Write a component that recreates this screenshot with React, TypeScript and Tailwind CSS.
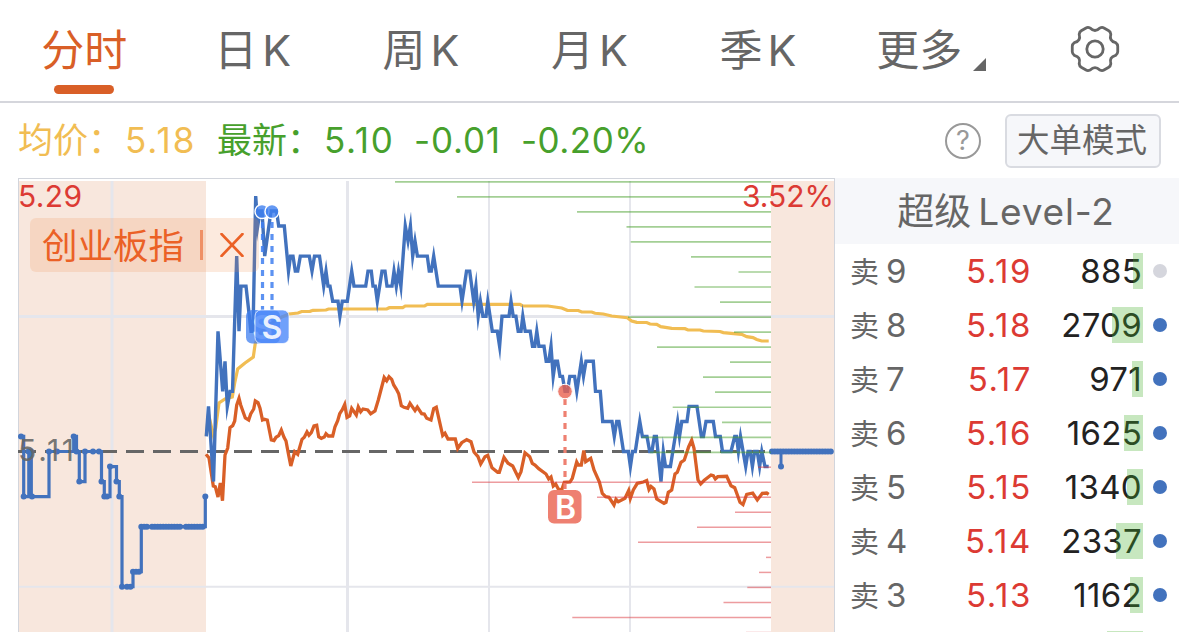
import type { ReactNode } from "react";
import clsx from "clsx";

type Point = [number, number];

type Order = {
  level: number;
  price: string;
  volume: string;
  bar: number;
  muted?: boolean;
};

const TABS = ["日", "周", "月", "季"];

const ORDERS: Order[] = [
  { level: 9, price: "5.19", volume: "885", bar: 10, muted: true },
  { level: 8, price: "5.18", volume: "2709", bar: 31 },
  { level: 7, price: "5.17", volume: "971", bar: 11 },
  { level: 6, price: "5.16", volume: "1625", bar: 19 },
  { level: 5, price: "5.15", volume: "1340", bar: 16 },
  { level: 4, price: "5.14", volume: "2337", bar: 27 },
  { level: 3, price: "5.13", volume: "1162", bar: 13 },
];

// Chart geometry: one price tick is 15.03px, previous close sits on BASE_Y
const BASE_Y = 451.5;
const TICK = 15.03;

// [x, ticks above previous close]
const PRICE: Point[] = [
  [206.3, 1], [208.5, 3], [213.5, -2], [218, 8], [222.7, 4], [225, 6], [227.3, 3], [230, 4], [232.5, 4],
  [236.7, 13], [239, 8], [241, 11], [246, 11], [251, 8], [253, 8], [255.7, 17], [257.7, 15], [260, 16], [262, 16],
  [264.7, 13], [271, 16], [276.5, 16], [278.7, 15], [284.3, 15], [288.5, 12], [290.5, 13], [293, 13], [295.3, 12],
  [297.7, 12], [300.3, 13], [309.3, 13], [312, 12], [314.5, 13], [319.5, 13], [323.7, 11], [326, 12], [328, 11],
  [330, 11], [332.7, 10], [338, 10], [339.9, 9], [342.3, 10], [347.3, 10], [351.7, 12], [354, 11], [365.7, 11],
  [368, 12], [371.3, 12], [373, 11], [375.3, 11], [377.3, 10], [382, 12], [385, 12], [387, 11], [392, 11],
  [394, 12], [396.3, 11], [398.5, 12], [400.9, 11], [405.3, 15], [408, 14], [410.4, 15], [412.7, 13], [415, 14],
  [417.4, 13], [427.3, 13], [429.3, 12], [431.3, 12], [433.7, 13], [438.3, 11], [460, 11], [462, 10], [466.5, 12],
  [469.7, 12], [473.7, 10], [475.9, 11], [478.2, 9], [480.4, 10], [482.9, 9], [486, 9], [487.8, 10], [492.3, 8],
  [497.3, 8], [499.6, 7], [502, 9], [509, 9], [511, 10], [513.2, 9], [515.9, 9], [518.2, 8], [521, 8], [522.8, 9],
  [525.2, 8], [530.2, 8], [532.5, 7], [534.8, 7], [536.8, 8], [538.9, 7], [544, 7], [546.2, 6], [548.8, 6],
  [551, 7], [553.2, 5], [555.4, 6], [557.5, 6], [560, 5], [562.5, 5], [565, 4], [567.5, 4], [569.8, 5], [574.6, 5],
  [576.8, 4], [581.3, 6], [583.5, 5], [586, 6], [593.3, 6], [595.5, 4], [600.3, 4], [602.7, 2], [612, 2], [614.3, 1],
  [616.7, 2], [618.9, 2], [623.5, 0], [628.3, 0], [630.4, -1], [632.6, 0], [635.3, 0], [639.8, 2], [642.4, 1],
  [647, 1], [649.7, 0], [651.9, 0], [654.3, 1], [656.4, 1], [661, -2], [663.3, 0], [665.5, -1], [670.4, -1],
  [677.6, 2], [679.5, 1], [681.8, 2], [687, 2], [689, 3], [697, 3], [701.4, 1], [703.4, 1], [706, 2], [713.3, 2],
  [715.5, 1], [720.3, 1], [722.5, 0], [731, 0], [734.7, 1], [736.5, 1], [738.4, 0], [740.5, 1], [745.7, -1],
  [748, 0], [750.2, 0], [752.4, -1], [754.6, 0], [757.2, 0], [759.6, -1], [761.8, 0], [765, -1], [768.7, -1],
];

const AVERAGE: Point[] = [
  [206.3, 436], [208.5, 414], [213.3, 435], [215.7, 428], [219, 403], [225, 399], [232.3, 397], [234.7, 383],
  [237.7, 369], [245, 363], [253.3, 357], [255.3, 343], [262, 331], [272, 323], [282, 317], [289, 314], [298, 313],
  [301.7, 311.5], [310, 311.3], [313, 310.3], [326, 310], [328.5, 309], [386.7, 309], [389.3, 307.7], [402.7, 307.6],
  [405.3, 306], [424.7, 305.8], [427.3, 304.3], [520, 304.3], [522.7, 305.8], [548, 306], [561.7, 308], [567.3, 310.3],
  [578.3, 310.5], [581.7, 312], [591.7, 312], [595, 313.3], [603.3, 314], [611.7, 316], [627.3, 317.7], [631.7, 321],
  [636.7, 322.4], [646.7, 322.5], [650, 324], [656.7, 324.3], [660.7, 326.6], [671.7, 328.3], [685, 328.7], [688, 330],
  [700, 330], [703.3, 331], [720, 331.5], [723.3, 332.6], [741.7, 334.3], [746.7, 336.6], [753, 337.6], [756.7, 339.4],
  [761.7, 341], [768.7, 341],
];

const INDEX: Point[] = [
  [206, 454.3], [209, 458], [213.3, 486], [215.3, 486.7], [218, 497], [220.3, 483], [222.5, 500.7], [225, 455],
  [227.7, 448], [230, 427.7], [232.7, 425.7], [234.7, 421], [236.7, 405], [239, 398.3], [240.7, 405], [245.3, 418],
  [248.7, 420], [250.7, 414], [253.7, 409], [255.3, 401], [258, 402.7], [260, 408.3], [262.5, 420], [264.3, 419.3],
  [267.3, 420], [271.3, 440], [274, 440.7], [276, 437.3], [278.7, 435.7], [281.3, 430], [284, 437.3], [286, 441],
  [288, 451.7], [290.8, 466], [294.7, 451.7], [297.7, 454.3], [302, 439.3], [304.3, 437.3], [307, 432], [309, 435.3],
  [311.3, 432.7], [314, 426], [316.7, 425.3], [318.7, 436.7], [321.3, 438.3], [324.3, 437], [326, 433.7], [328.3, 436],
  [332.7, 436], [335, 426.7], [337.7, 420.7], [339.7, 413.7], [342.3, 409.7], [344.7, 404.5], [347, 417.5],
  [349.7, 416], [351.7, 408.3], [356.3, 415], [358.3, 407], [360.7, 411.7], [363, 409], [367.7, 410], [370.7, 413.8],
  [375, 411], [378.3, 400], [384.2, 377.5], [386.7, 380.7], [389, 376.7], [391.7, 379.3], [393.7, 385], [396.3, 389],
  [398.7, 393.7], [401.3, 405.7], [404, 407.3], [407.7, 408.3], [410, 403.3], [415, 410.6], [417.3, 407],
  [421.7, 413.7], [424.3, 414], [426.7, 418.3], [431, 420], [433.7, 408.7], [436.3, 407.3], [442.7, 435.5], [445, 433.2],
  [448, 439], [455.3, 439], [457.7, 448.5], [461.7, 442.7], [466.7, 439.7], [471, 441.7], [474, 452], [478, 456.7],
  [480.7, 464], [485, 456.7], [487.7, 455.3], [492, 467.7], [497.7, 472.3], [499.3, 472.3], [504, 457.5], [508, 463.3],
  [512.7, 466], [518.3, 477.5], [521, 471.7], [525, 452.7], [529.7, 456.7], [532.3, 463.3], [535, 465], [538.7, 468.7],
  [546, 474], [548.7, 479], [551, 477], [553.3, 486], [555.7, 484], [558.3, 489], [561.7, 490], [564.3, 482.3],
  [570, 482], [572.3, 478.3], [576.7, 462], [578.3, 465], [581.3, 465], [583.8, 450.5], [585.7, 461.7], [590.7, 458.3],
  [594, 470], [599.3, 481.7], [602.3, 493.3], [605.7, 496.7], [609, 497.3], [614, 505], [616, 499.3], [618.3, 501.7],
  [625, 498.3], [628.7, 490.5], [630.3, 498.5], [633.3, 490], [637.3, 483.3], [643.3, 482], [646.7, 480.5], [649, 489.5],
  [651, 486.5], [654, 489], [656.7, 499], [664, 503.3], [666, 502.3], [668.3, 492.3], [671.7, 490], [675, 474],
  [677.3, 472.3], [681, 462.3], [684.3, 460], [688.7, 446.7], [691.7, 440.3], [694, 448.3], [698, 480], [700.7, 484],
  [704.3, 480.3], [711, 475], [713.3, 475.7], [715.3, 479], [717.7, 476.7], [726.7, 476.3], [731, 485.7],
  [734.7, 487.7], [740, 502.2], [743, 504.5], [746.7, 494.3], [752.7, 493], [757.3, 500], [762.3, 493.3], [766.7, 493],
  [768.7, 494.3],
];

const AUCTION: Point[] = [
  [21, 1], [23.7, 1], [23.7, -3], [28.8, -3], [28.8, 0], [31.3, 0], [31.3, -3], [49, -3], [49, 0], [73.7, 0],
  [73.7, 1], [76.5, 1], [76.5, 0], [79.3, 0], [79.3, -2], [85, -2], [85, 0], [101.5, 0], [101.5, -2], [104.3, -2],
  [104.3, -3], [110, -3], [110, -1], [116.5, -1], [116.5, -2], [119.3, -2], [119.3, -3], [122, -3], [122, -9],
  [133, -9], [133, -8], [141.3, -8], [141.3, -5], [205.3, -5], [205.3, -3],
];

const AUCTION_DOTS: Point[] = [
  [21, 1], [23.7, -3], [28.5, 0], [31, 0], [32, -3], [49, 0], [57, 0], [73.7, 1], [76.5, 0], [79.3, -2], [85, 0],
  [93, 0], [99, 0], [101.5, -2], [104.3, -3], [107, -3], [110, -1], [116.5, -2], [119.3, -3], [122, -9], [127, -9],
  [130.5, -9], [133, -8], [136, -8], [139, -8], [205.3, -3], [781, -1],
];

// Left edge of each volume-by-price line, top to bottom
const SELL_LINES = [395, 457, 577, 626.5, 630.7, 691, 738.5, 694.5, 720, 628, 734, 657, 730, 703, 715, 672.7, 722, 641.7, 650];
const BUY_LINES = [758, 472, 597, 735, 697, 638, 766, 759, 747.3, 723.5, 572.3, 746];

const tickY = (ticks: number) => BASE_Y - ticks * TICK;
const toPoints = (points: Point[]) => points.map((p) => p.join(",")).join(" ");
const fromTicks = (points: Point[]): Point[] => points.map(([x, t]) => [x, tickY(t)]);
const range = (from: number, to: number, step: number) =>
  Array.from({ length: Math.floor((to - from) / step) + 1 }, (_, i) => from + i * step);

const gearPath = () => {
  const at = (deg: number, r: number) => {
    const a = (deg * Math.PI) / 180;
    return `${(25 + r * Math.cos(a)).toFixed(2)} ${(25 + r * Math.sin(a)).toFixed(2)}`;
  };
  const lobes = [0, 60, 120, 180, 240, 300].map(
    (d) =>
      `${d === 0 ? "M" : "L"}${at(d - 17, 21.6)} Q${at(d - 12, 23.2)} ${at(d - 7, 22.9)} L${at(d + 7, 22.9)} Q${at(d + 12, 23.2)} ${at(d + 17, 21.6)} Q${at(d + 30, 16)} ${at(d + 43, 21.6)}`
  );
  return `${lobes.join(" ")} Z`;
};

const Tab = ({ children }: { children: ReactNode }) => (
  <div className="flex items-center justify-center text-[43px] leading-none text-[#666]">{children}</div>
);

const TabBar = () => (
  <div className="grid h-[103px] grid-cols-7 border-b-2 border-[#d5d6dc]">
    <div className="flex flex-col items-center pt-[29px] text-[#d95f27]">
      <span className="text-[43px] leading-[43px]">分时</span>
      <span className="mt-[13px] h-[9px] w-[60px] rounded-full bg-[#d95f27]" />
    </div>
    {TABS.map((tab) => (
      <Tab key={tab}>
        <span className="mr-[5px]">{tab}</span>K
      </Tab>
    ))}
    <Tab>
      <span className="ml-2.5">更多</span>
      <svg width="13" height="13" className="mt-7 ml-[11px]">
        <path d="M13 0V13H0Z" fill="#666" />
      </svg>
    </Tab>
    <div className="flex items-center justify-center pb-1">
      <svg width="50" height="50" fill="none" stroke="#666" strokeWidth="2.8" strokeLinejoin="round">
        <path d={gearPath()} />
        <circle cx="25" cy="25" r="8.2" />
      </svg>
    </div>
  </div>
);

const QuoteBar = () => (
  <div className="flex h-[75px] items-center pr-[18px] pl-[18px] text-[35px] leading-none whitespace-nowrap">
    <span className="w-[107px] text-[#f1bd53]">均价：</span>
    <span className="w-[92px] tracking-[2px] text-[#f1bd53]">5.18</span>
    <div className="flex grow text-[#47a02c]">
      <span className="w-[107px]">最新：</span>
      <span className="w-[90px] tracking-[1.7px]">5.10</span>
      <span className="w-[107px] tracking-[0.8px]">-0.01</span>
      <span className="tracking-[0.5px]">-0.20%</span>
    </div>
    <span className="mr-6 flex size-9 items-center justify-center rounded-full border-2 border-[#999] text-[27px] text-[#999]">?</span>
    <span className="flex h-[54px] w-[156px] items-center justify-center rounded-md border-2 border-[#d9dbe1] bg-[#f6f7fa] pt-0.5 pr-0.5 text-[32.5px] text-[#666]">
      大单模式
    </span>
  </div>
);

const Chart = () => (
  <svg width="817" height="454" viewBox="18 178 817 454" className="block" fill="none">
    <path d="M19 181H206V632H19ZM771 181H834V632H771Z" fill="#f8e7dd" />
    <g stroke="#e5e6ec">
      <path d="M112 181V632" strokeWidth="3" />
      <path d="M347.5 181V632" strokeWidth="3" />
      <path d="M489 181V632M630 181V632M19 586.7H834" strokeWidth="2" />
      <path d="M19 316.5H834" strokeWidth="3" />
    </g>
    <path d="M18 178.5H835M18.5 178V632M834.5 178V632" stroke="#d2d5dc" />

    <path d={`M18 ${BASE_Y}H771`} stroke="#666" strokeWidth="3" strokeDasharray="18 9" />

    {/* Main traces */}
    <polyline points={toPoints(AVERAGE)} stroke="#f1bd53" strokeWidth="3.2" />
    <polyline points={toPoints(INDEX)} stroke="#d95f27" strokeWidth="3.3" />
    <polyline points={toPoints(fromTicks(PRICE))} stroke="#4272bd" strokeWidth="3.4" strokeMiterlimit="10" />
    <polyline points={toPoints(fromTicks(AUCTION))} stroke="#4272bd" strokeWidth="3.2" />
    <path d={`M771 ${BASE_Y}H833M781 ${BASE_Y}V466`} stroke="#4272bd" strokeWidth="3" />
    <g fill="#4272bd">
      {AUCTION_DOTS.map(([x, t], i) => (
        <circle key={i} cx={x} cy={tickY(t)} r="3" />
      ))}
      {[...range(141.3, 147, 2.8), ...range(152, 181, 2.8), ...range(186, 204, 2.8)].map((x) => (
        <circle key={x} cx={x} cy={tickY(-5)} r="3" />
      ))}
      {range(772, 832, 2.8).map((x) => (
        <circle key={x} cx={x} cy={BASE_Y} r="3" />
      ))}
    </g>

    {/* Volume by price */}
    <g stroke="#47a02c" strokeOpacity="0.5" strokeWidth="1.7">
      {SELL_LINES.map((x, i) => (
        <path key={i} d={`M${x} ${181.8 + i * TICK}H771`} />
      ))}
    </g>
    <g stroke="#dc3a3f" strokeOpacity="0.5" strokeWidth="1.5">
      {BUY_LINES.map((x, i) => (
        <path key={i} d={`M${x} ${467.2 + i * TICK}H771`} />
      ))}
    </g>

    {/* Axis labels */}
    <g fontSize="30" fill="#dc3a33">
      <text x="18" y="207" textLength="64">5.29</text>
      <text x="742" y="207" textLength="92">3.52%</text>
      <text x="18" y="461" textLength="56" fill="#666" fillOpacity="0.9">5.11</text>
    </g>

    {/* Sell markers */}
    <g stroke="#3f7ff0" strokeOpacity="0.85" strokeWidth="3.2" strokeDasharray="6 6">
      <path d="M262.5 222V310M272 222V310" />
    </g>
    <g fill="#3f7ff0" fillOpacity="0.8" stroke="#fff" strokeWidth="1.4">
      <circle cx="262" cy="211.5" r="7" />
      <circle cx="272" cy="211.5" r="7" />
    </g>
    <rect x="246" y="310" width="34" height="33.5" rx="6" fill="#3f7ff0" fillOpacity="0.75" />
    <text x="262.5" y="339" fontSize="32" fontWeight="600" textAnchor="middle" fill="#fff" fillOpacity="0.7">S</text>
    <rect x="255" y="310" width="34" height="33.5" rx="6" fill="#4c88fa" fillOpacity="0.8" stroke="#fff" strokeOpacity="0.7" />
    <text x="272" y="338.5" fontSize="32" fontWeight="600" textAnchor="middle" fill="#fff" fillOpacity="0.88">S</text>

    {/* Buy marker */}
    <path d="M565 399V490" stroke="#ee8071" strokeWidth="3.2" strokeDasharray="6 6" />
    <circle cx="565" cy="391.5" r="7.3" fill="#e8604f" fillOpacity="0.8" stroke="#fff" strokeWidth="1" />
    <rect x="548" y="490" width="33.5" height="33.5" rx="6" fill="#ee8071" />
    <text x="565.5" y="518.5" fontSize="32" fontWeight="600" textAnchor="middle" fill="#fff">B</text>
  </svg>
);

const IndexChip = () => (
  <div className="absolute top-[40px] left-3 flex h-[54px] w-[229px] items-center rounded-md bg-[#ee8a4a]/18 pl-3 text-[#eb6126]">
    <span className="pt-[3px] text-[35.5px] leading-none">创业板指</span>
    <span className="ml-4 h-[30px] w-[3px] bg-[#eb6126]/60" />
    <svg width="24" height="24" className="ml-[17px]" stroke="currentColor" strokeWidth="2.6" strokeLinecap="round">
      <path d="M1.5 1 22.5 23M22.5 1 1.5 23" />
    </svg>
  </div>
);

const OrderBook = () => (
  <div className="w-[344px]">
    <div className="flex h-[66px] items-center justify-center bg-[#f6f7fa] pr-0.5 text-[37px] leading-none text-[#666]">
      <span className="mr-[7px]">超级</span>
      <span className="tracking-[0.8px]">Level-2</span>
    </div>
    {ORDERS.map((order) => (
      <div key={order.level} className="flex h-[54px] items-center pt-px pr-3 pl-[15px] text-[33px] leading-none">
        <span className="flex w-[79px] items-center text-[#666]">
          <span className="mr-[7px] pt-px text-[29px]">卖</span>
          {order.level}
        </span>
        <span className="w-[103px] text-right tracking-[1.6px] text-[#dc3a33]">{order.price}</span>
        <span className="relative flex h-9 grow items-center justify-end pr-px text-[#222]">
          <span className="tracking-[0.3px]">{order.volume}</span>
          <span className="absolute -top-px right-0 h-9 bg-[#47b02c]/30" style={{ width: order.bar }} />
        </span>
        <span className={clsx("mb-px ml-2.5 size-3.5 rounded-full", order.muted ? "bg-[#d5d6dd]" : "bg-[#4272bd]")} />
      </div>
    ))}
    {/* Depth bar of the next row peeking in */}
    <div className="mt-[9px] ml-[272px] h-9 w-9 bg-[#47b02c]/30" />
  </div>
);

const App = () => (
  <div className="h-[632px] w-[1179px] overflow-hidden bg-white font-['Inter','Noto_Sans_CJK_SC',sans-serif]">
    <TabBar />
    <QuoteBar />
    <div className="flex pl-[18px]">
      <div className="relative w-[817px]">
        <Chart />
        <IndexChip />
      </div>
      <OrderBook />
    </div>
  </div>
);

export default App;
